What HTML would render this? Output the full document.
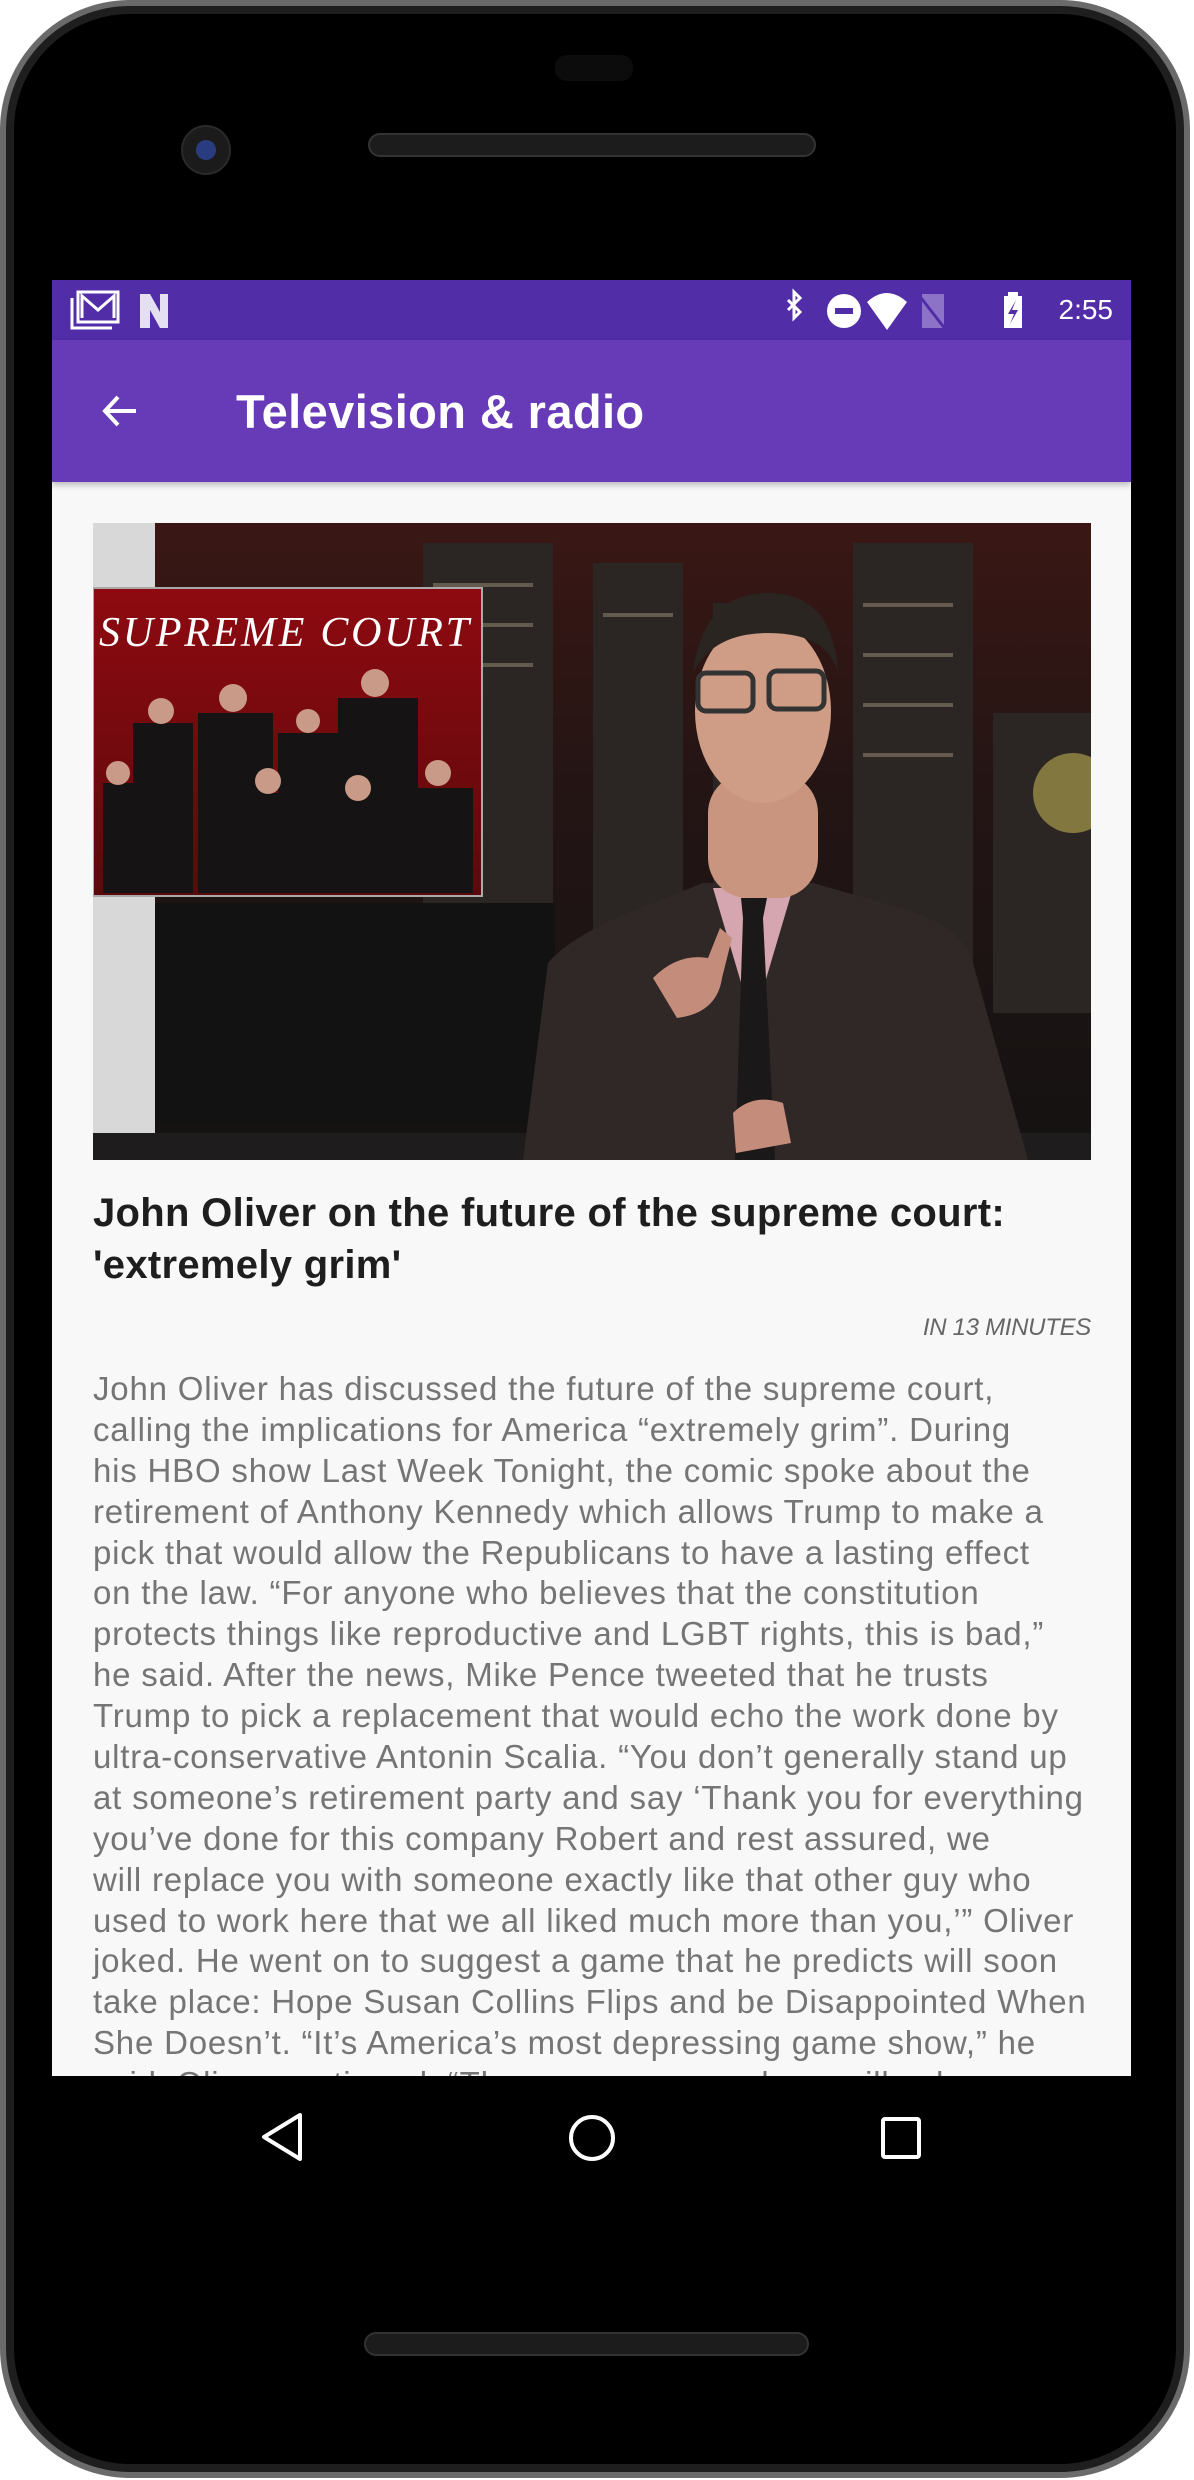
<!DOCTYPE html>
<html><head><meta charset="utf-8"><style>
*{margin:0;padding:0;box-sizing:border-box}
html,body{width:1194px;height:2480px;background:#fff;overflow:hidden;font-family:"Liberation Sans",sans-serif}
.phone{position:absolute;left:0;top:0;width:1190px;height:2478px;border-radius:130px;background:#6a6a6a;}
.phone2{position:absolute;left:6px;top:6px;width:1178px;height:2466px;border-radius:124px;background:#1e1e1e;}
.phone3{position:absolute;left:14px;top:14px;width:1162px;height:2450px;border-radius:116px;background:#000;}
.screen{position:absolute;left:52px;top:280px;width:1079px;height:1796px;background:#f8f8f8;overflow:hidden}
.status{position:absolute;left:0;top:0;width:1079px;height:60px;background:#512da8}
.appbar{position:absolute;left:0;top:60px;width:1079px;height:142px;background:#673ab7;box-shadow:0 3px 6px rgba(0,0,0,.25)}
.title{position:absolute;left:184px;top:44px;color:#fff;font-size:47px;font-weight:bold;letter-spacing:0.4px}
.time{position:absolute;right:18px;top:14px;color:#fff;font-size:28px}
.img{position:absolute;left:41px;top:243px;width:998px;height:637px}
.h{position:absolute;left:41px;top:907px;width:1030px;font-size:40px;font-weight:bold;color:#1e1e1e;line-height:52px;letter-spacing:0.3px}
.min{position:absolute;right:40px;top:1034px;font-size:24px;font-style:italic;color:#666;letter-spacing:-0.3px}
.body{position:absolute;left:41px;top:1089px;font-size:33px;color:#757575;line-height:40.9px;white-space:nowrap;letter-spacing:0.8px}
.body div{height:40.9px}
.spk{position:absolute;height:24px;border-radius:12px;background:#1c1c1c;border:2px solid #333}
</style></head><body>
<div class="phone"></div><div class="phone2"></div><div class="phone3"></div>
<div style="position:absolute;left:555px;top:55px;width:78px;height:26px;border-radius:12px;background:#0c0c0c"></div>
<div class="spk" style="left:368px;top:133px;width:448px"></div>
<div style="position:absolute;left:181px;top:125px;width:50px;height:50px;border-radius:50%;background:#1b1b1b;border:2px solid #2a2a2a"></div>
<div style="position:absolute;left:196px;top:140px;width:20px;height:20px;border-radius:50%;background:#2a3c80"></div>
<div class="spk" style="left:364px;top:2332px;width:445px"></div>
<div class="screen">
 <div class="status">
  <svg width="1079" height="60" style="position:absolute;left:0;top:0">
   <g fill="none" stroke="#fff" stroke-width="3"><rect x="26" y="12" width="40" height="30"/><path d="M20 18v30h40"/><path d="M30 38V16l16 14 16-14v22"/></g>
   <path d="M88 14h10l10 18V14h8v34h-8L98 30v18h-10z" fill="#fff" opacity=".85"/>
   <path d="M736 20l12 12-6 6V12l6 6-12 12" fill="none" stroke="#fff" stroke-width="3"/>
   <circle cx="792" cy="31" r="17" fill="#fff"/><rect x="783" y="28" width="18" height="6" fill="#512da8"/>
   <path d="M815 22q20-18 40 0l-20 28z" fill="#fff"/>
   <path d="M870 14h22v34h-22z" fill="#8c73c8"/><path d="M866 14l28 36" stroke="#512da8" stroke-width="3"/>
   <rect x="952" y="16" width="18" height="32" fill="#fff"/><rect x="956" y="12" width="10" height="5" fill="#fff"/><path d="M964 20l-8 14h6l-4 10 8-14h-6z" fill="#512da8"/>
  </svg>
  <div class="time">2:55</div>
 </div>
 <div class="appbar">
  <svg width="50" height="50" style="position:absolute;left:46px;top:46px"><path d="M38 25H8M20 11L7 25l13 14" fill="none" stroke="#fff" stroke-width="4"/></svg>
  <div class="title">Television &amp; radio</div>
 </div>
 <svg class="img" viewBox="0 0 998 637">
  <defs><linearGradient id="sky" x1="0" y1="0" x2="0" y2="1"><stop offset="0" stop-color="#3a1714"/><stop offset=".4" stop-color="#241514"/><stop offset="1" stop-color="#141212"/></linearGradient>
  <linearGradient id="red" x1="0" y1="0" x2="0" y2="1"><stop offset="0" stop-color="#8e0a10"/><stop offset="1" stop-color="#5a0a0c"/></linearGradient></defs>
  <rect width="998" height="637" fill="url(#sky)"/>
  <rect width="62" height="637" fill="#d8d8d8"/>
  <g fill="#2b2624"><rect x="330" y="20" width="130" height="420"/><rect x="500" y="40" width="90" height="400"/><rect x="760" y="20" width="120" height="420"/><rect x="620" y="80" width="80" height="360"/><rect x="900" y="190" width="98" height="300"/></g>
  <g fill="#8a7e6a" opacity=".6"><rect x="340" y="60" width="100" height="4"/><rect x="340" y="100" width="100" height="4"/><rect x="340" y="140" width="100" height="4"/><rect x="510" y="90" width="70" height="4"/><rect x="770" y="80" width="90" height="4"/><rect x="770" y="130" width="90" height="4"/><rect x="770" y="180" width="90" height="4"/><rect x="770" y="230" width="90" height="4"/></g>
  <ellipse cx="980" cy="270" rx="40" ry="40" fill="#a89a4a" opacity=".7"/>
  <rect x="62" y="380" width="400" height="220" fill="#121212"/>
  <rect x="0" y="65" width="389" height="308" fill="url(#red)" stroke="#aaa" stroke-width="2"/>
  <text x="6" y="123" font-family="Liberation Serif,serif" font-style="italic" font-size="42" fill="#fff" textLength="370">SUPREME  COURT</text>
  <g fill="#151313"><rect x="10" y="260" width="45" height="110"/><rect x="40" y="200" width="60" height="170"/><rect x="105" y="190" width="75" height="180"/><rect x="185" y="210" width="60" height="160"/><rect x="245" y="175" width="80" height="195"/><rect x="140" y="270" width="70" height="100"/><rect x="225" y="275" width="85" height="95"/><rect x="300" y="265" width="80" height="105"/></g>
  <g fill="#c99a88"><circle cx="25" cy="250" r="12"/><circle cx="68" cy="188" r="13"/><circle cx="140" cy="175" r="14"/><circle cx="215" cy="198" r="12"/><circle cx="282" cy="160" r="14"/><circle cx="175" cy="258" r="13"/><circle cx="265" cy="265" r="13"/><circle cx="345" cy="250" r="13"/></g>
  <rect x="0" y="610" width="998" height="27" fill="#1e1c1c"/>
  <path d="M430 637L455 440Q480 410 560 380L610 360 720 360 790 380Q870 400 880 440L935 637z" fill="#2f2826"/>
  <path d="M620 365L660 500 700 365z" fill="#d6a6b0"/>
  <path d="M648 375h26l-4 20 12 242h-40l8-242z" fill="#1a1818"/>
  <rect x="615" y="250" width="110" height="125" rx="40" fill="#c9957e"/>
  <ellipse cx="670" cy="188" rx="68" ry="92" fill="#cf9c86"/>
  <path d="M600 150q10-80 75-80 65 0 70 80q-10-40-70-40-55 0-75 40z" fill="#2b2522"/>
  <g fill="none" stroke="#333" stroke-width="5"><rect x="605" y="150" width="55" height="38" rx="8"/><rect x="676" y="148" width="55" height="38" rx="8"/></g>
  <path d="M560 455q25-25 55-20l12-30 12 10-10 40q-5 35-45 40z" fill="#c48c7a"/>
  <path d="M640 590q20-20 50-10l8 40-55 10z" fill="#c48c7a"/>
 </svg>
 <div class="h">John Oliver on the future of the supreme court:<br>'extremely grim'</div>
 <div class="min">IN 13 MINUTES</div>
 <div class="body">
<div>John Oliver has discussed the future of the supreme court,</div>
<div>calling the implications for America “extremely grim”. During</div>
<div>his HBO show Last Week Tonight, the comic spoke about the</div>
<div>retirement of Anthony Kennedy which allows Trump to make a</div>
<div>pick that would allow the Republicans to have a lasting effect</div>
<div>on the law. “For anyone who believes that the constitution</div>
<div>protects things like reproductive and LGBT rights, this is bad,”</div>
<div>he said. After the news, Mike Pence tweeted that he trusts</div>
<div>Trump to pick a replacement that would echo the work done by</div>
<div>ultra-conservative Antonin Scalia. “You don’t generally stand up</div>
<div>at someone’s retirement party and say ‘Thank you for everything</div>
<div>you’ve done for this company Robert and rest assured, we</div>
<div>will replace you with someone exactly like that other guy who</div>
<div>used to work here that we all liked much more than you,’” Oliver</div>
<div>joked. He went on to suggest a game that he predicts will soon</div>
<div>take place: Hope Susan Collins Flips and be Disappointed When</div>
<div>She Doesn’t. “It’s America’s most depressing game show,” he</div>
<div>said. Oliver continued: “The consequences here will echo</div>
 </div>
</div>
<svg width="1194" height="120" style="position:absolute;left:0;top:2077px">
 <path d="M300 38L264 60l36 22z" fill="none" stroke="#fff" stroke-width="4" stroke-linejoin="round"/>
 <circle cx="592" cy="61" r="21" fill="none" stroke="#fff" stroke-width="4"/>
 <rect x="883" y="42" width="36" height="38" rx="2" fill="none" stroke="#fff" stroke-width="4"/>
</svg>
</body></html>
